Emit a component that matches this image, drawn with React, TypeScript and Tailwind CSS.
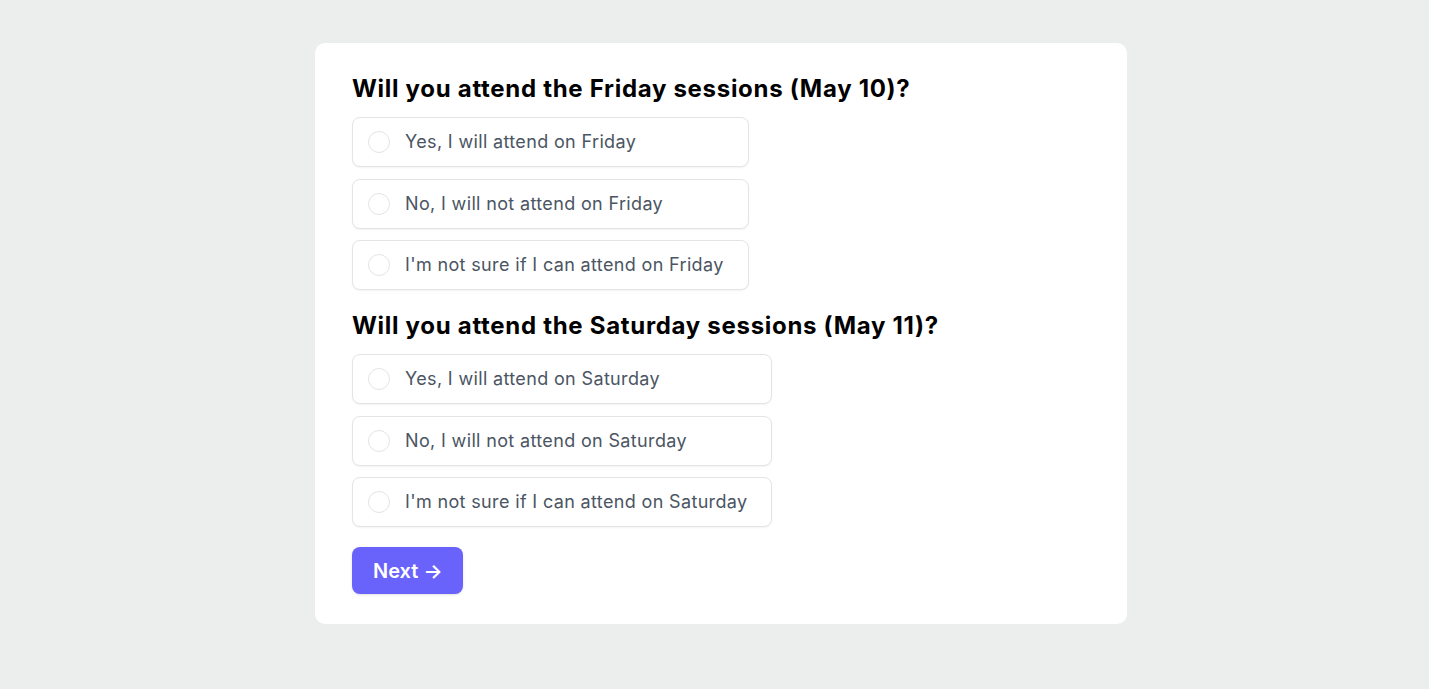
import React, { useState } from 'react';

interface Question {
  id: string;
  title: string;
  options: string[];
}

const questions: Question[] = [
  {
    id: 'friday',
    title: 'Will you attend the Friday sessions (May 10)?',
    options: [
      'Yes, I will attend on Friday',
      'No, I will not attend on Friday',
      "I'm not sure if I can attend on Friday",
    ],
  },
  {
    id: 'saturday',
    title: 'Will you attend the Saturday sessions (May 11)?',
    options: [
      'Yes, I will attend on Saturday',
      'No, I will not attend on Saturday',
      "I'm not sure if I can attend on Saturday",
    ],
  },
];

export default function App() {
  const [answers, setAnswers] = useState<Record<string, string>>({});

  return (
    <div className="min-h-screen w-full bg-[#eceeed] pt-[43px] pl-[13px] font-['Inter',sans-serif]">
      <div className="mx-auto w-[812px] rounded-[10px] bg-white px-[37px] pt-[30px] pb-[30px] flex flex-col gap-5">
        {questions.map((q) => (
          <div key={q.id} className="flex flex-col gap-3">
            <h2 className="text-[24px] leading-8 font-bold text-black tracking-[0.7px]">{q.title}</h2>
            <div className="flex w-fit flex-col gap-[11.5px]">
              {q.options.map((opt) => {
                const checked = answers[q.id] === opt;
                return (
                  <label
                    key={opt}
                    onClick={() => setAnswers({ ...answers, [q.id]: opt })}
                    className="flex h-[50px] cursor-pointer items-center rounded-lg border border-[#e2e4e8] bg-white pl-[15px] pr-6 shadow-[0_1px_2px_rgba(0,0,0,0.05)]"
                  >
                    <span
                      className={`h-[22px] w-[22px] shrink-0 rounded-full border ${
                        checked ? 'border-[#6a63fb] border-[6px]' : 'border-[#e2e4e8]'
                      }`}
                    ></span>
                    <span className="ml-[15px] text-[18px] leading-7 tracking-[0.35px] text-[#4b5563]">{opt}</span>
                  </label>
                );
              })}
            </div>
          </div>
        ))}
        <div>
          <button className="h-[47px] rounded-lg bg-[#6a63fb] px-[21px] text-[20px] font-semibold text-white shadow-sm">
            Next →
          </button>
        </div>
      </div>
    </div>
  );
}
